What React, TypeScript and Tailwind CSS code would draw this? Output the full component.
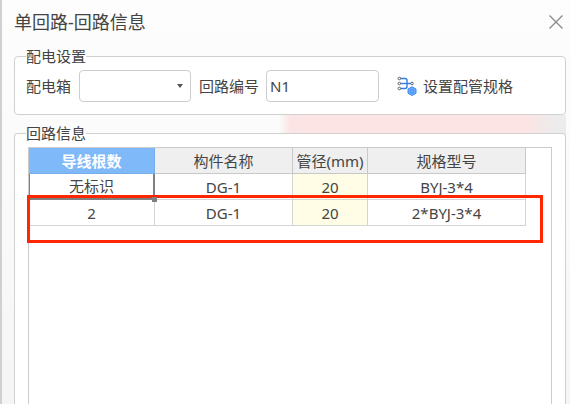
import type { ReactNode } from "react";

interface CircuitRow {
    wires: string;
    name: string;
    diameter: string;
    spec: string;
}

const rows: CircuitRow[] = [
    { wires: "无标识", name: "DG-1", diameter: "20", spec: "BYJ-3*4" },
    { wires: "2", name: "DG-1", diameter: "20", spec: "2*BYJ-3*4" },
];

const PipeSpecIcon = () => (
    <svg width="20" height="20" viewBox="0 0 20 20" fill="none" aria-hidden="true">
        <g stroke="#2f7de8" strokeWidth="1.4">
            <path d="M3 2.500h5q2 0 2 2v6q0 2-2 2H3" />
            <path d="M3 7.500h11" />
        </g>
        <g stroke="#5b6470" strokeWidth="1" fill="#fff">
            <circle cx="2.300" cy="2.500" r="1.300" />
            <circle cx="2.300" cy="7.500" r="1.300" />
            <circle cx="2.300" cy="12.500" r="1.300" />
            <circle cx="15" cy="7.500" r="1.300" />
        </g>
        <path
            d="M15 10.800l4 2.200v4.300l-4 2.200l-4-2.200V13z"
            fill="#6aacf7"
            stroke="#3b8af2"
            strokeLinejoin="round"
        />
        <circle cx="15" cy="15.200" r="1.800" stroke="#3b8af2" strokeWidth="0.800" />
    </svg>
);

const HeadCell = ({ children }: { children: ReactNode }) => (
    <th className="border-r border-b border-[#c8c8c8] bg-[#efefef] p-0 font-normal">
        {children}
    </th>
);

const CircuitTable = () => (
    <table className="w-[497px] table-fixed border-separate border-spacing-0 text-center">
        <colgroup>
            <col className="w-[126px]" />
            <col className="w-[138px]" />
            <col className="w-[75px]" />
            <col className="w-[158px]" />
        </colgroup>
        <thead>
            <tr className="h-[26px]">
                <th className="border-r border-b border-[#74aeed] bg-[#80b9fa] p-0 font-bold text-white">
                    导线根数
                </th>
                <HeadCell>构件名称</HeadCell>
                <HeadCell>管径(mm)</HeadCell>
                <HeadCell>规格型号</HeadCell>
            </tr>
        </thead>
        <tbody>
            {rows.map((row, index) => (
                <tr key={row.spec} className="h-[26px]">
                    {index === 0 ? (
                        <td className="relative border-r-2 border-b-2 border-l border-[#808080] p-0">
                            {row.wires}
                            <span className="absolute -right-1 -bottom-1 z-20 size-[5px] bg-[#808080]" />
                        </td>
                    ) : (
                        <td className="border-r border-b border-[#d4d4d4] p-0">{row.wires}</td>
                    )}
                    <td className="border-r border-b border-[#d4d4d4] p-0">{row.name}</td>
                    <td className="border-r border-b border-[#d4d4d4] bg-[#fffde6] p-0">
                        {row.diameter}
                    </td>
                    <td className="border-r border-b border-[#d4d4d4] p-0">{row.spec}</td>
                </tr>
            ))}
        </tbody>
    </table>
);

export default function App() {
    return (
        <div className="flex min-h-screen flex-col border-l-2 border-[#d0d0d0] bg-linear-to-b from-[#fdfdfd] via-[#fafafa] to-[#f5f5f5] pr-1 pl-3 font-['Noto_Sans','Noto_Sans_CJK_SC',sans-serif] text-[15px] leading-5 text-[#444]">
            <header className="flex h-11 items-center justify-between">
                <h1 className="text-lg leading-6">单回路-回路信息</h1>
                <button type="button" aria-label="关闭" className="p-[3px] text-[#8c8c8c]">
                    <svg width="14" height="14" viewBox="0 0 14 14" stroke="currentColor" strokeWidth="1.400">
                        <path d="M0.500 0.500l13 13M13.500 0.500l-13 13" />
                    </svg>
                </button>
            </header>

            <fieldset className="mt-0.5 rounded border border-[#d0d0d0] bg-white pl-[11px]">
                <legend>配电设置</legend>
                <div className="flex items-center pt-1 pb-3">
                    <label htmlFor="box">配电箱</label>
                    <div className="relative ml-2">
                        <select
                            id="box"
                            className="block h-8 w-[112px] appearance-none rounded border border-[#cdcdcd] bg-white px-1"
                        >
                            <option value=""></option>
                        </select>
                        <svg
                            className="pointer-events-none absolute top-3.5 right-2"
                            width="6"
                            height="4"
                            viewBox="0 0 6 4"
                            fill="#555"
                        >
                            <path d="M0 0h6L3 4z" />
                        </svg>
                    </div>
                    <label htmlFor="number" className="ml-2">
                        回路编号
                    </label>
                    <input
                        id="number"
                        type="text"
                        defaultValue="N1"
                        className="ml-[7px] h-8 w-[113px] rounded border border-[#cdcdcd] bg-white px-[3px]"
                    />
                    <button type="button" className="ml-[18px] flex items-center gap-1.5">
                        <PipeSpecIcon />
                        设置配管规格
                    </button>
                </div>
            </fieldset>

            <div className="flex grow flex-col bg-linear-to-r from-transparent from-48% via-[#fce4e4] via-50% to-[#fce4e4]">
                <div className="flex grow flex-col bg-linear-to-r from-transparent from-93% to-[#ececec] to-98% pt-2">
                    <fieldset className="grow rounded-t border border-b-0 border-[#d0d0d0] bg-white px-[13px]">
                        <legend className="ml-[-2px]">回路信息</legend>
                        <div className="relative mt-1 min-h-[calc(100vh-147px)] border border-b-0 border-[#cbcbcb]">
                            <CircuitTable />
                            <div className="pointer-events-none absolute top-[47px] right-2 -left-0.5 z-10 h-12 border-3 border-[#ff2600]" />
                        </div>
                    </fieldset>
                </div>
            </div>
        </div>
    );
}
